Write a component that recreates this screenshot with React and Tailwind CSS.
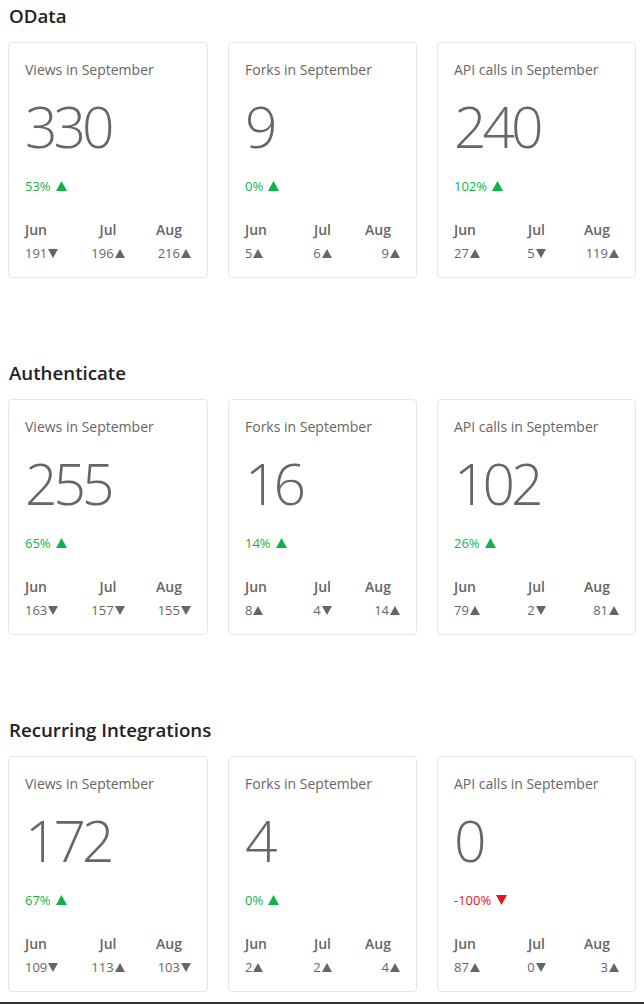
import React from 'react'

const sections = [
  {
    name: 'OData',
    cards: [
      { title: 'Views in September', value: 330, pct: '53%', up: true, months: [['191', false], ['196', true], ['216', true]] },
      { title: 'Forks in September', value: 9, pct: '0%', up: true, months: [['5', true], ['6', true], ['9', true]] },
      { title: 'API calls in September', value: 240, pct: '102%', up: true, months: [['27', true], ['5', false], ['119', true]] },
    ],
  },
  {
    name: 'Authenticate',
    cards: [
      { title: 'Views in September', value: 255, pct: '65%', up: true, months: [['163', false], ['157', false], ['155', false]] },
      { title: 'Forks in September', value: 16, pct: '14%', up: true, months: [['8', true], ['4', false], ['14', true]] },
      { title: 'API calls in September', value: 102, pct: '26%', up: true, months: [['79', true], ['2', false], ['81', true]] },
    ],
  },
  {
    name: 'Recurring Integrations',
    cards: [
      { title: 'Views in September', value: 172, pct: '67%', up: true, months: [['109', false], ['113', true], ['103', false]] },
      { title: 'Forks in September', value: 4, pct: '0%', up: true, months: [['2', true], ['2', true], ['4', true]] },
      { title: 'API calls in September', value: 0, pct: '-100%', up: false, months: [['87', true], ['0', false], ['3', true]] },
    ],
  },
]

const Arrow = ({ up, className }) => (
  <svg viewBox="0 0 10 9" className={className}>
    {up ? <polygon points="5,0 10,9 0,9" fill="currentColor" /> : <polygon points="0,0 10,0 5,9" fill="currentColor" />}
  </svg>
)

const Value = ({ v, up }) => (
  <span className="inline-flex items-center">
    {v}
    <Arrow up={up} className="w-[10px] h-[9px] ml-[1px]" />
  </span>
)

const StatCard = ({ card }) => (
  <div className="border border-[#e6e6e6] rounded-[4px] bg-white px-4 pt-[17px] pb-[14px] text-[#666]">
    <div className="text-[14px] leading-[20px] font-medium whitespace-nowrap">{card.title}</div>
    <div className="mt-4 text-[57px] leading-[60px] font-light tracking-[-4px] h-[60px]">{card.value}</div>
    <div className={`mt-[20px] text-[13px] leading-[20px] flex items-center gap-[5px] ${card.up ? 'text-[#10b34a]' : 'text-[#e81123]'}`}>
      <span>{card.pct}</span>
      <Arrow up={card.up} className="w-[11px] h-[10px]" />
    </div>
    <div className="mt-6 grid grid-cols-3 text-[14px] leading-[20px] font-semibold">
      <div>Jun</div>
      <div className="text-center">Jul</div>
      <div className="text-right pr-[9px]">Aug</div>
    </div>
    <div className="mt-[3px] grid grid-cols-3 text-[13px] leading-[20px]">
      <div><Value v={card.months[0][0]} up={card.months[0][1]} /></div>
      <div className="text-center"><Value v={card.months[1][0]} up={card.months[1][1]} /></div>
      <div className="text-right"><Value v={card.months[2][0]} up={card.months[2][1]} /></div>
    </div>
  </div>
)

export default function App() {
  return (
    <div className="h-[1004px] overflow-hidden bg-white" style={{ fontFamily: '"Open Sans", "Noto Sans", sans-serif' }}>
      <div className="px-2">
        {sections.map((s, i) => (
          <div key={s.name} className={i < sections.length - 1 ? 'mb-[79px]' : ''}>
            <h2 className="h-[42px] pt-[3px] text-[18.7px] leading-[26px] font-semibold text-[#222] pl-[1px]">{s.name}</h2>
            <div className="grid grid-cols-[200px_189px_199px] gap-5">
              {s.cards.map((c) => (
                <StatCard key={c.title} card={c} />
              ))}
            </div>
          </div>
        ))}
      </div>
      <div className="mt-[10px] h-[4px] bg-[#333]" />
    </div>
  )
}
